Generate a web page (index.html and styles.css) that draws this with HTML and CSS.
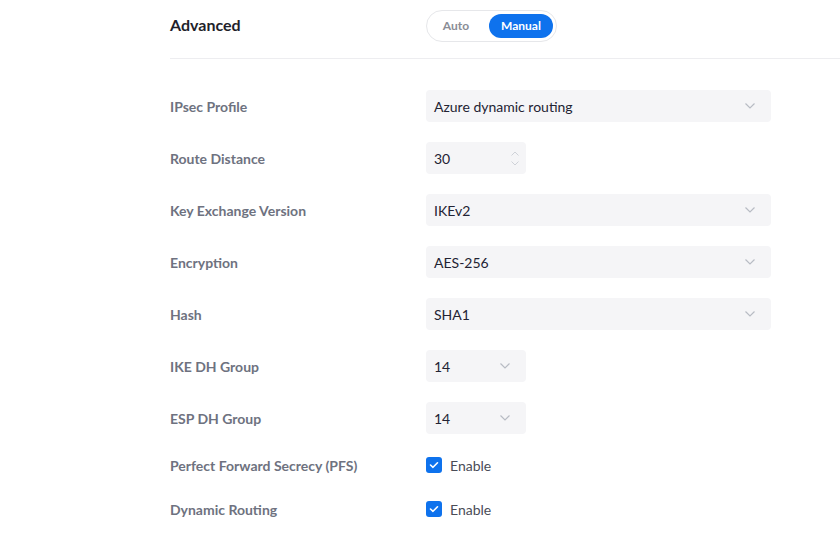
FILE: index.html
```html
<!DOCTYPE html>
<html lang="en">
<head>
<meta charset="utf-8">
<title>Advanced</title>
<link rel="stylesheet" href="styles.css">
</head>
<body>
<div class="page">
  <div class="header">
    <div class="title">Advanced</div>
    <div class="toggle">
      <span class="opt">Auto</span>
      <span class="opt active">Manual</span>
    </div>
  </div>
  <div class="form">
    <div class="row">
      <div class="label">IPsec Profile</div>
      <div class="select wide"><span>Azure dynamic routing</span><svg class="chev" width="10" height="6" viewBox="0 0 10 6"><path d="M0.5 0.5 L5 5 L9.5 0.5" fill="none" stroke="#b8bcc4" stroke-width="1.2"/></svg></div>
    </div>
    <div class="row">
      <div class="label">Route Distance</div>
      <div class="select narrow"><span>30</span>
        <span class="spin">
          <svg width="8" height="5" viewBox="0 0 8 5"><path d="M0.5 4.5 L4 1 L7.5 4.5" fill="none" stroke="#cfd2d8" stroke-width="1"/></svg>
          <svg width="8" height="5" viewBox="0 0 8 5"><path d="M0.5 0.5 L4 4 L7.5 0.5" fill="none" stroke="#cfd2d8" stroke-width="1"/></svg>
        </span>
      </div>
    </div>
    <div class="row">
      <div class="label">Key Exchange Version</div>
      <div class="select wide"><span>IKEv2</span><svg class="chev" width="10" height="6" viewBox="0 0 10 6"><path d="M0.5 0.5 L5 5 L9.5 0.5" fill="none" stroke="#b8bcc4" stroke-width="1.2"/></svg></div>
    </div>
    <div class="row">
      <div class="label">Encryption</div>
      <div class="select wide"><span>AES-256</span><svg class="chev" width="10" height="6" viewBox="0 0 10 6"><path d="M0.5 0.5 L5 5 L9.5 0.5" fill="none" stroke="#b8bcc4" stroke-width="1.2"/></svg></div>
    </div>
    <div class="row">
      <div class="label">Hash</div>
      <div class="select wide"><span>SHA1</span><svg class="chev" width="10" height="6" viewBox="0 0 10 6"><path d="M0.5 0.5 L5 5 L9.5 0.5" fill="none" stroke="#b8bcc4" stroke-width="1.2"/></svg></div>
    </div>
    <div class="row">
      <div class="label">IKE DH Group</div>
      <div class="select narrow"><span>14</span><svg class="chev" width="10" height="6" viewBox="0 0 10 6"><path d="M0.5 0.5 L5 5 L9.5 0.5" fill="none" stroke="#b8bcc4" stroke-width="1.2"/></svg></div>
    </div>
    <div class="row">
      <div class="label">ESP DH Group</div>
      <div class="select narrow"><span>14</span><svg class="chev" width="10" height="6" viewBox="0 0 10 6"><path d="M0.5 0.5 L5 5 L9.5 0.5" fill="none" stroke="#b8bcc4" stroke-width="1.2"/></svg></div>
    </div>
    <div class="row check-row first-check">
      <div class="label">Perfect Forward Secrecy (PFS)</div>
      <label class="check"><span class="box"><svg width="10" height="8" viewBox="0 0 10 8"><path d="M1.5 4 L4 6.3 L8.5 1.8" fill="none" stroke="#fff" stroke-width="1.6" stroke-linecap="round" stroke-linejoin="round"/></svg></span><span class="check-text">Enable</span></label>
    </div>
    <div class="row check-row">
      <div class="label">Dynamic Routing</div>
      <label class="check"><span class="box"><svg width="10" height="8" viewBox="0 0 10 8"><path d="M1.5 4 L4 6.3 L8.5 1.8" fill="none" stroke="#fff" stroke-width="1.6" stroke-linecap="round" stroke-linejoin="round"/></svg></span><span class="check-text">Enable</span></label>
    </div>
  </div>
</div>
</body>
</html>
```
FILE: styles.css
```css
html, body {
  margin: 0;
  padding: 0;
  background: #ffffff;
}
body {
  font-family: Lato, "Open Sans", sans-serif;
  color: #232333;
}
.page {
  padding-left: 170px;
}
.header {
  display: flex;
  align-items: center;
  padding: 10px 0 16px;
  border-bottom: 1px solid #ededf0;
}
.title {
  width: 256px;
  margin-bottom: 4px;
  font-size: 16px;
  font-weight: 700;
  color: #1f1f2b;
}
.toggle {
  display: flex;
  align-items: center;
  height: 30px;
  padding: 0 3px 0 0;
  border: 1px solid #e6e7ea;
  border-radius: 16px;
}
.opt {
  box-sizing: border-box;
  width: 62px;
  padding-right: 4px;
  text-align: center;
  font-size: 12px;
  font-weight: 700;
  color: #8a8d95;
  line-height: 24px;
}
.opt.active {
  width: 64px;
  padding-right: 0;
  background: #0e72ed;
  color: #ffffff;
  border-radius: 12px;
}
.form {
  display: flex;
  flex-direction: column;
  gap: 20px;
  padding-top: 31px;
}
.row {
  display: flex;
  align-items: center;
  height: 32px;
}
.label {
  width: 256px;
  font-size: 14px;
  font-weight: 700;
  color: #6e7280;
}
.select {
  display: flex;
  align-items: center;
  justify-content: space-between;
  box-sizing: border-box;
  height: 32px;
  padding: 0 16px 0 8px;
  background: #f5f5f7;
  border-radius: 4px;
  font-size: 14px;
  color: #232333;
}
.select.wide {
  width: 345px;
}
.select.narrow {
  width: 100px;
}
.narrow .spin {
  display: flex;
  flex-direction: column;
  gap: 5px;
  margin-right: -9px;
}
.narrow .spin svg {
  display: block;
}
.chev {
  display: block;
}
.check-row {
  height: 24px;
}
.first-check {
  margin-top: -1px;
}
.check {
  display: flex;
  align-items: center;
  gap: 8px;
  font-size: 14px;
  color: #4a4c57;
}
.box {
  display: flex;
  align-items: center;
  justify-content: center;
  width: 16px;
  height: 16px;
  border-radius: 3px;
  background: #0e72ed;
}
.box svg {
  display: block;
}
```
